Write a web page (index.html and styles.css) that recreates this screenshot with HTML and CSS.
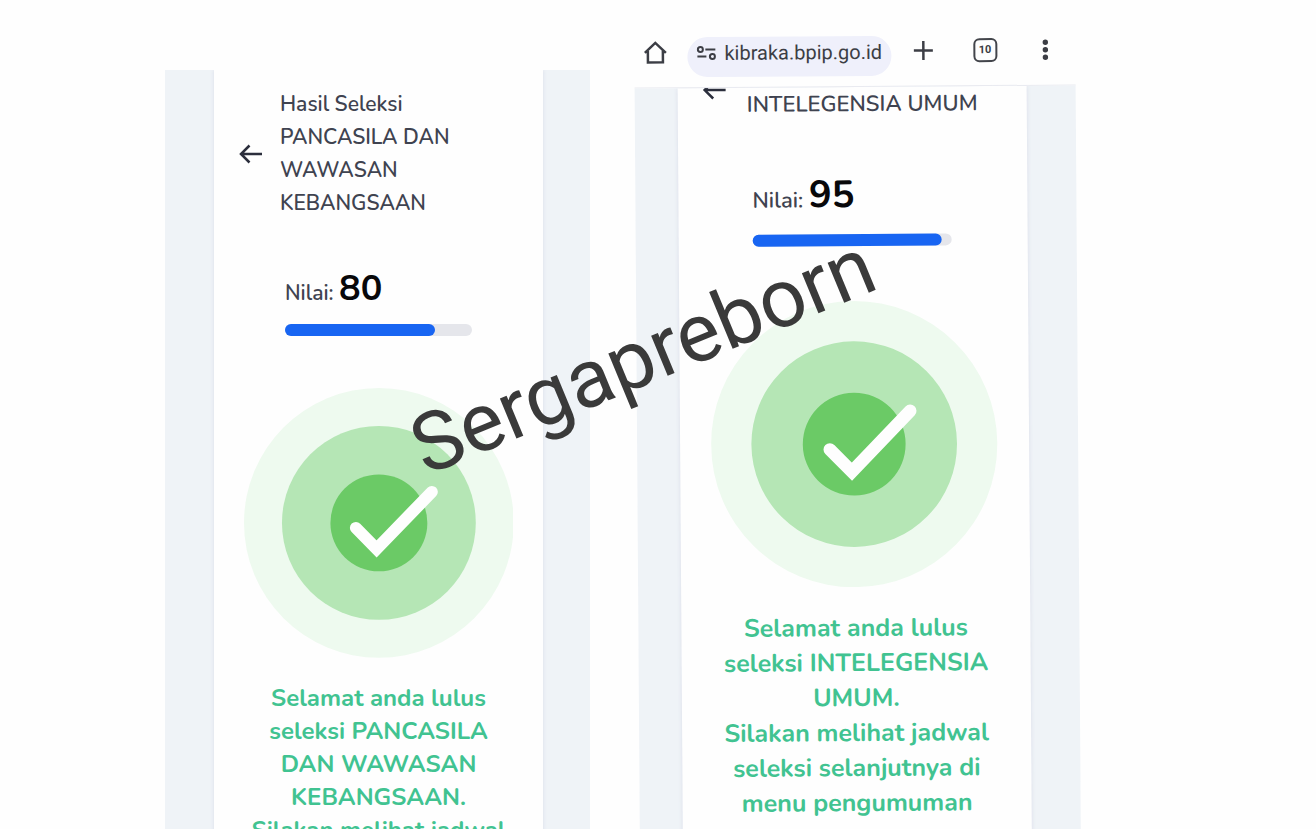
FILE: index.html
```html
<!DOCTYPE html>
<html lang="id">
<head>
<meta charset="utf-8">
<meta name="viewport" content="width=device-width, initial-scale=1">
<title>Hasil Seleksi</title>
<link rel="stylesheet" href="styles.css">
</head>
<body>
<main class="collage">
  <section class="phone phone-left">
    <div class="screen">
      <article class="card">
        <header class="heading">
          <button class="back" type="button" aria-label="Kembali">
            <svg viewBox="0 0 24 24"><path d="M23 12H2M10.500 3.500 2 12l8.500 8.500"/></svg>
          </button>
          <h1 class="title">Hasil Seleksi<br>PANCASILA DAN<br>WAWASAN<br>KEBANGSAAN</h1>
        </header>
        <div class="score">
          <p class="score-line">Nilai: <strong>80</strong></p>
          <div class="track"><div class="fill" style="width:80%"></div></div>
        </div>
        <svg class="badge" viewBox="0 0 270 270" aria-hidden="true">
          <circle class="ring-outer" cx="135" cy="135" r="135"/>
          <circle class="ring-middle" cx="135" cy="135" r="97"/>
          <circle class="ring-inner" cx="135" cy="135" r="48.500"/>
          <path class="tick" d="M112 140l20.700 21L188 104"/>
        </svg>
        <p class="message">Selamat anda lulus<br>seleksi PANCASILA<br>DAN WAWASAN<br>KEBANGSAAN.<br>Silakan melihat jadwal</p>
      </article>
    </div>
  </section>

  <section class="phone phone-right">
    <nav class="toolbar">
      <button class="tool" type="button" aria-label="Beranda">
        <svg viewBox="0 0 24 24"><path d="M1.500 12.500 12 2.500l10.500 10M4.500 10.500V22h15V10.500"/></svg>
      </button>
      <button class="address" type="button">
        <svg viewBox="0 0 20 18"><circle cx="4" cy="5.500" r="2.500"/><circle cx="16" cy="12.500" r="2.500"/><path d="M9 5.500h10M1 12.500h9"/></svg>
        <span>kibraka.bpip.go.id</span>
      </button>
      <button class="tool" type="button" aria-label="Tab baru">
        <svg viewBox="0 0 24 24"><path d="M12 2.500v19M2.500 12h19"/></svg>
      </button>
      <button class="tool tabs" type="button" aria-label="10 tab">10</button>
      <button class="tool more" type="button" aria-label="Menu">
        <svg viewBox="0 0 24 24"><g class="dots"><circle cx="12" cy="4.500" r="2.700"/><circle cx="12" cy="12" r="2.700"/><circle cx="12" cy="19.500" r="2.700"/></g></svg>
      </button>
    </nav>
    <div class="screen">
      <article class="card">
        <header class="heading">
          <button class="back" type="button" aria-label="Kembali">
            <svg viewBox="0 0 24 24"><path d="M23 12H2M10.500 3.500 2 12l8.500 8.500"/></svg>
          </button>
          <h1 class="title">INTELEGENSIA UMUM</h1>
        </header>
        <div class="score">
          <p class="score-line">Nilai: <strong>95</strong></p>
          <div class="track"><div class="fill" style="width:95%"></div></div>
        </div>
        <svg class="badge" viewBox="0 0 270 270" aria-hidden="true">
          <circle class="ring-outer" cx="135" cy="135" r="135"/>
          <circle class="ring-middle" cx="135" cy="135" r="97"/>
          <circle class="ring-inner" cx="135" cy="135" r="48.500"/>
          <path class="tick" d="M112 140l20.700 21L188 104"/>
        </svg>
        <p class="message">Selamat anda lulus<br>seleksi INTELEGENSIA<br>UMUM.<br>Silakan melihat jadwal<br>seleksi selanjutnya di<br>menu pengumuman</p>
      </article>
    </div>
  </section>

  <div class="watermark">Sergapreborn</div>
</main>
</body>
</html>
```
FILE: styles.css
```css
* {
  box-sizing: border-box;
}

body {
  margin: 0;
  background: #fefefe;
  color: #3f4350;
  font-family: Nunito, Lato, "Noto Sans", sans-serif;
}

h1,
p {
  margin: 0;
}

button {
  border: 0;
  padding: 0;
  background: none;
  color: inherit;
  font: inherit;
}

svg {
  display: block;
  fill: none;
  stroke: currentColor;
}

.collage {
  position: relative;
  display: grid;
  grid-template-columns: 165fr 425fr 47fr 441fr 238fr;
  height: 100vh;
  overflow: hidden;
}

.phone {
  display: flex;
  flex-direction: column;
  font-weight: 600;
}

.phone-left {
  grid-column: 2;
  padding-top: 70px;
  font-size: 21px;
  line-height: 33px;
}

.phone-right {
  grid-column: 4;
  padding-top: 36px;
  margin-bottom: -10px;
  font-size: 22px;
  line-height: 35px;
  transform: rotate(-0.4deg);
}

.screen {
  flex: 1;
  padding: 0 47px 0 49px;
  background: #eff3f7;
  overflow: hidden;
}

.phone-right .screen {
  padding: 0 49px 0 43px;
}

.card {
  height: 100%;
  background: #fefefe;
  box-shadow: 0 0 4px #d9dce8;
}

.heading {
  display: flex;
  align-items: center;
  gap: 17px;
  padding: 18px 0 0 25px;
}

.back {
  flex: none;
  width: 24px;
  color: #2b2e3c;
}

.back svg {
  width: 24px;
  height: 24px;
  stroke-width: 2.500;
}

.title {
  font-size: inherit;
  font-weight: inherit;
}

.score {
  margin: 48px 71px 0;
}

.score-line {
  line-height: 42px;
  white-space: nowrap;
}

.score-line strong {
  color: #08080a;
  font-size: 36px;
  font-weight: 700;
}

.track {
  height: 12px;
  margin-top: 10px;
  border-radius: 6px;
  background: #e5e6eb;
}

.fill {
  height: 100%;
  border-radius: 6px;
  background: #1865f2;
}

.badge {
  width: 82%;
  margin: 52px auto 0;
}

.ring-outer {
  fill: #eefaef;
  stroke: none;
}

.ring-middle {
  fill: #b5e6b5;
  stroke: none;
}

.ring-inner {
  fill: #6bca66;
  stroke: none;
}

.tick {
  stroke: #fefefe;
  stroke-width: 12;
  stroke-linecap: round;
}

.message {
  margin-top: 24px;
  color: #41c391;
  font-size: 24px;
  font-weight: 700;
  text-align: center;
  white-space: nowrap;
}

.phone-right .heading {
  align-items: flex-start;
  gap: 20px;
  padding-top: 0;
}

.phone-right .back {
  margin-top: -10px;
}

.phone-right .score {
  margin: 52px 76px 0 74px;
}

.phone-right .score-line strong {
  font-size: 38px;
}

.phone-right .track {
  margin-top: 13px;
}

.phone-right .badge {
  margin-top: 55px;
}

.phone-right .message {
  font-size: 25px;
}

.toolbar {
  display: flex;
  align-items: flex-start;
  gap: 20px;
  height: 51px;
  padding-left: 9px;
  border-bottom: 1px solid #e9eaf0;
  color: #3c3e45;
}

.tool {
  width: 24px;
  height: 24px;
  margin-top: 3px;
}

.tool svg {
  width: 24px;
  height: 24px;
  stroke-width: 2.500;
}

.tabs {
  margin-left: 18px;
  border: 2px solid #43454b;
  border-radius: 6px;
  font: 700 11px/20px Roboto, sans-serif;
}

.more {
  margin-left: 16px;
}

.dots {
  fill: currentColor;
  stroke: none;
}

.address {
  display: flex;
  align-items: center;
  gap: 8px;
  height: 40px;
  padding: 0 9px 8px;
  border-radius: 20px;
  background: #eff0fb;
  font: 20px/32px Roboto, sans-serif;
  white-space: nowrap;
}

.address svg {
  width: 20px;
  height: 18px;
  stroke-width: 2;
}

.watermark {
  position: absolute;
  top: 407px;
  left: 426px;
  color: #3a3a3a;
  font: 82px/82px Roboto, sans-serif;
  white-space: nowrap;
  transform: rotate(-22.5deg);
  transform-origin: 0 69px;
}
```
